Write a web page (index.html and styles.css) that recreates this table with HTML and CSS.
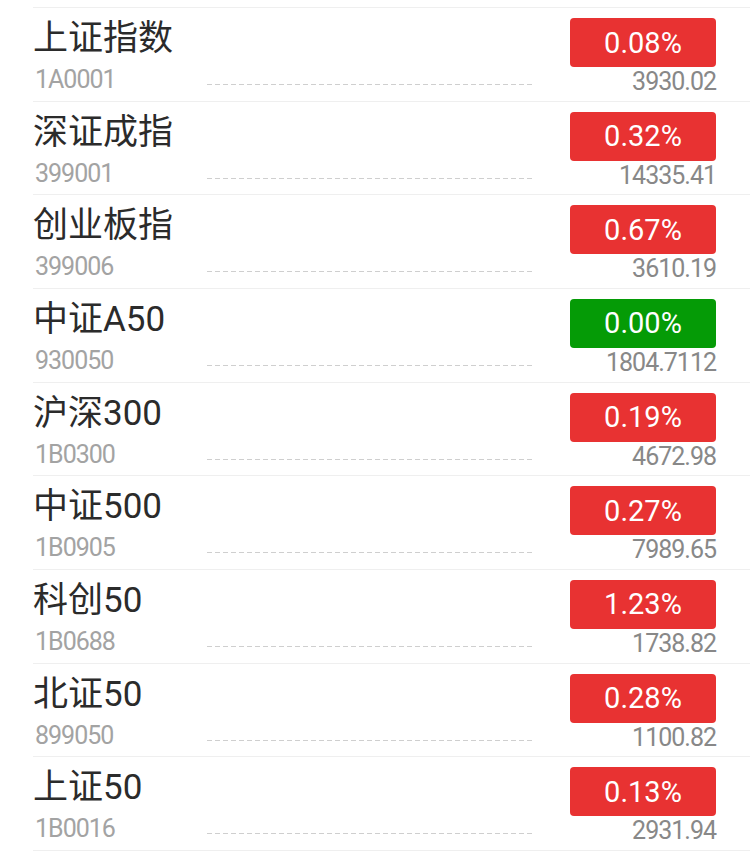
FILE: index.html
```html
<!DOCTYPE html>
<html lang="zh-CN">
<head>
<meta charset="utf-8">
<title>指数</title>
<link rel="stylesheet" href="styles.css">
</head>
<body>
<ul class="list">
  <li class="row">
    <div class="info"><div class="name">上证指数</div><div class="code">1A0001</div></div>
    <div class="dash"></div>
    <div class="quote"><div class="badge up">0.08%</div><div class="price">3930.02</div></div>
  </li>
  <li class="row">
    <div class="info"><div class="name">深证成指</div><div class="code">399001</div></div>
    <div class="dash"></div>
    <div class="quote"><div class="badge up">0.32%</div><div class="price">14335.41</div></div>
  </li>
  <li class="row">
    <div class="info"><div class="name">创业板指</div><div class="code">399006</div></div>
    <div class="dash"></div>
    <div class="quote"><div class="badge up">0.67%</div><div class="price">3610.19</div></div>
  </li>
  <li class="row">
    <div class="info"><div class="name">中证A50</div><div class="code">930050</div></div>
    <div class="dash"></div>
    <div class="quote"><div class="badge flat">0.00%</div><div class="price">1804.7112</div></div>
  </li>
  <li class="row">
    <div class="info"><div class="name">沪深300</div><div class="code">1B0300</div></div>
    <div class="dash"></div>
    <div class="quote"><div class="badge up">0.19%</div><div class="price">4672.98</div></div>
  </li>
  <li class="row">
    <div class="info"><div class="name">中证500</div><div class="code">1B0905</div></div>
    <div class="dash"></div>
    <div class="quote"><div class="badge up">0.27%</div><div class="price">7989.65</div></div>
  </li>
  <li class="row">
    <div class="info"><div class="name">科创50</div><div class="code">1B0688</div></div>
    <div class="dash"></div>
    <div class="quote"><div class="badge up">1.23%</div><div class="price">1738.82</div></div>
  </li>
  <li class="row">
    <div class="info"><div class="name">北证50</div><div class="code">899050</div></div>
    <div class="dash"></div>
    <div class="quote"><div class="badge up">0.28%</div><div class="price">1100.82</div></div>
  </li>
  <li class="row">
    <div class="info"><div class="name">上证50</div><div class="code">1B0016</div></div>
    <div class="dash"></div>
    <div class="quote"><div class="badge up">0.13%</div><div class="price">2931.94</div></div>
  </li>
</ul>
</body>
</html>
```
FILE: styles.css
```css
html, body {
  margin: 0;
  padding: 0;
  background: #ffffff;
}

body {
  font-family: Roboto, "Noto Sans CJK SC", sans-serif;
}

.list {
  list-style: none;
  margin: 7px 0 0 33px;
  padding: 0;
  border-bottom: 1px solid #efefef;
}

.row {
  display: grid;
  grid-template-columns: 174px 1fr 146px;
  height: 92.67px;
  border-top: 1px solid #efefef;
  padding: 0 34px 0 0;
}

.info {
  padding-top: 11px;
}

.name {
  font-size: 35px;
  line-height: 40px;
  color: #2b2b2b;
  white-space: nowrap;
}

.code {
  margin-top: 8px;
  font-size: 25px;
  line-height: 25px;
  letter-spacing: -1px;
  color: #a3a3a3;
  padding-left: 2px;
}

.dash {
  height: 1px;
  margin: 76px 35px 0 0;
  background: repeating-linear-gradient(to right, #cfcfcf 0 5px, transparent 5px 8px);
}

.quote {
  display: flex;
  flex-direction: column;
  align-items: flex-end;
  padding-top: 10px;
}

.badge {
  width: 146px;
  height: 49px;
  border-radius: 4px;
  display: flex;
  align-items: center;
  justify-content: center;
  color: #ffffff;
  font-size: 29px;
  font-weight: 400;
}

.badge.up {
  background: #e83232;
}

.badge.flat {
  background: #059b06;
}

.price {
  margin-top: 2px;
  font-size: 25px;
  line-height: 25px;
  letter-spacing: -1px;
  color: #888888;
}
```
